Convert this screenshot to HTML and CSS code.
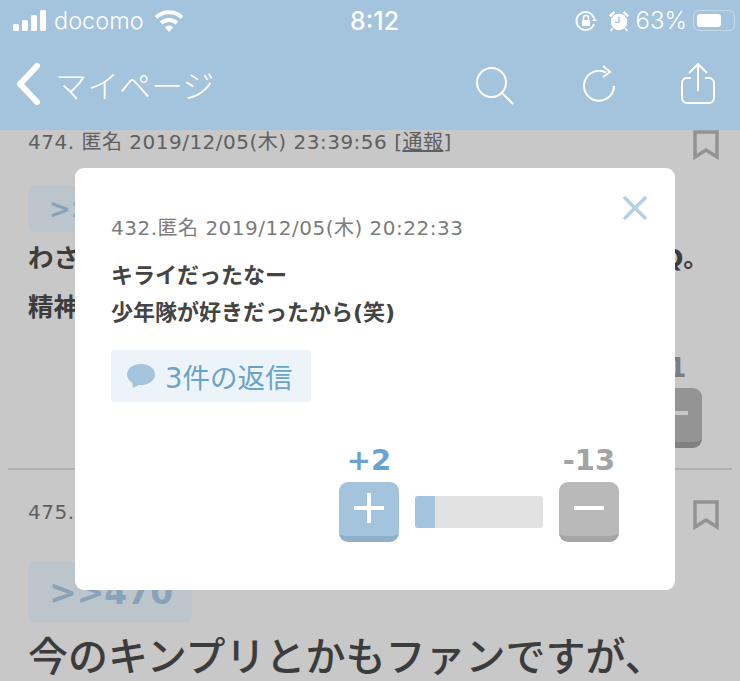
FILE: index.html
```html
<!doctype html>
<html lang="ja">
<head>
    <meta charset="UTF-8">
    <title>マイページ</title>
    <link rel="stylesheet" href="styles.css">
</head>
<body>
    <div class="screen">
        <div class="header">
            <div class="statusbar">
                <div class="status-left">
                    <svg class="signal" width="34" height="22" viewBox="0 0 34 22"><rect x="0" y="14" width="6" height="7" rx="1.5"/><rect x="9" y="10" width="6" height="11" rx="1.5"/><rect x="18" y="5" width="6" height="16" rx="1.5"/><rect x="27" y="0" width="6" height="21" rx="1.5"/></svg>
                    <span class="carrier">docomo</span>
                    <svg class="wifi" width="30" height="22" viewBox="0 0 30 22"><path d="M2 7.5a19 19 0 0 1 26 0" fill="none" stroke="#fff" stroke-width="4"/><path d="M7 13a12 12 0 0 1 16 0" fill="none" stroke="#fff" stroke-width="4"/><path d="M10.800 17.200a6 6 0 0 1 8.400 0L15 22z" fill="#fff"/></svg>
                </div>
                <div class="clock">8:12</div>
                <div class="status-right">
                    <svg class="lock" width="22" height="22" viewBox="0 0 22 22"><path d="M19 8a9 9 0 1 0 0 6" fill="none" stroke="#fff" stroke-width="2"/><path d="M17 11h5l-2.500-3z" fill="#fff"/><rect x="7" y="10" width="8" height="6" rx="1" fill="#fff"/><path d="M8.500 10V8a2.500 2.500 0 0 1 5 0v2" fill="none" stroke="#fff" stroke-width="1.500"/></svg>
                    <svg class="alarm" width="22" height="22" viewBox="0 0 24 24"><circle cx="12" cy="13" r="9" fill="#fff"/><path d="M12 7v6.500H7.500" fill="none" stroke="#a4c3dd" stroke-width="1.500"/><path d="M1 6l5-5 2 2-5 5zM23 6l-5-5-2 2 5 5z" fill="#fff"/><path d="M5 20l-2 3M19 20l2 3" stroke="#fff" stroke-width="2"/></svg>
                    <span class="percent">63%</span>
                    <div class="battery"><div class="battery-level"></div></div>
                </div>
            </div>
            <div class="navbar">
                <a class="back">
                    <svg width="28" height="44" viewBox="0 0 28 44"><path d="M23 4L6 22l17 18" fill="none" stroke="#fff" stroke-width="6" stroke-linecap="round" stroke-linejoin="round"/></svg>
                    <span>マイページ</span>
                </a>
                <div class="nav-icons">
                    <svg class="search" width="38" height="38" viewBox="0 0 38 38"><circle cx="15.500" cy="15.500" r="14.500" fill="none" stroke="#fff" stroke-width="2"/><path d="M26 26l11 11" stroke="#fff" stroke-width="2"/></svg>
                    <svg width="34" height="38" viewBox="0 0 34 38"><path d="M24 7.500A15 15 0 1 0 32 21" fill="none" stroke="#fff" stroke-width="2"/><path d="M21 1l7 6-7 5" fill="none" stroke="#fff" stroke-width="2"/></svg>
                    <svg width="34" height="42" viewBox="0 0 34 42"><path d="M10 15H6a5 5 0 0 0-5 5v15a5 5 0 0 0 5 5h22a5 5 0 0 0 5-5V20a5 5 0 0 0-5-5h-4" fill="none" stroke="#fff" stroke-width="2"/><path d="M17 28V2M8 10l9-9 9 9" fill="none" stroke="#fff" stroke-width="2"/></svg>
                </div>
            </div>
        </div>

        <div class="post post-first">
            <div class="post-meta">
                <span>474. 匿名 2019/12/05(木) 23:39:56 [<u>通報</u>]</span>
                <svg class="bookmark" width="26" height="30" viewBox="0 0 26 30"><path d="M2 2h22v25l-11-7-11 7z" fill="none" stroke="#929292" stroke-width="3.500"/></svg>
            </div>
            <div class="anchor anchor-small">&gt;&gt;470</div>
            <p class="post-text">わさびさんってメンタルが弱いって言ってたのかなあ、Q。</p>
            <p class="post-text">精神</p>
            <div class="vote-behind">
                <div class="count-behind">-1</div>
                <div class="minus-behind"><div class="minus-bar"></div></div>
            </div>
        </div>

        <div class="post post-second">
            <div class="post-meta">
                <span>475.</span>
                <svg class="bookmark" width="26" height="30" viewBox="0 0 26 30"><path d="M2 2h22v25l-11-7-11 7z" fill="none" stroke="#929292" stroke-width="3.500"/></svg>
            </div>
            <div class="anchor">&gt;&gt;470</div>
            <p class="post-big">今のキンプリとかもファンですが、</p>
        </div>

        <div class="modal">
            <svg class="close" width="28" height="28" viewBox="0 0 28 28"><path d="M3 3l22 22M25 3L3 25" stroke="#b3d0e4" stroke-width="3.500"/></svg>
            <div class="modal-meta">432.匿名 2019/12/05(木) 20:22:33</div>
            <div class="modal-text">
                <p>キライだったなー</p>
                <p>少年隊が好きだったから(笑)</p>
            </div>
            <div class="replies">
                <svg width="30" height="26" viewBox="0 0 30 26"><ellipse cx="15" cy="11.500" rx="14" ry="10.500" fill="#a4c3dd"/><path d="M6 17l1 8 9-5z" fill="#a4c3dd"/></svg>
                <span>3件の返信</span>
            </div>
            <div class="votes">
                <div class="vote">
                    <div class="vote-count plus">+2</div>
                    <div class="vote-btn btn-plus"><svg width="30" height="30" viewBox="0 0 30 30"><path d="M1 15h28M15 1v28" stroke="#fff" stroke-width="4" stroke-linecap="round"/></svg></div>
                </div>
                <div class="meter"><div class="meter-fill" style="width:20px"></div></div>
                <div class="vote">
                    <div class="vote-count minus">-13</div>
                    <div class="vote-btn btn-minus"><svg width="30" height="30" viewBox="0 0 30 30"><path d="M1 15h28" stroke="#fff" stroke-width="4" stroke-linecap="round"/></svg></div>
                </div>
            </div>
        </div>
    </div>
</body>
</html>
```

FILE: styles.css
```css
* {
    box-sizing: border-box;
    margin: 0;
    padding: 0;
}
body {
    overflow: hidden;
    font-family: "DejaVu Sans", "Noto Sans CJK JP", sans-serif;
}
.screen {
    position: relative;
    width: 740px;
    height: 681px;
    overflow: hidden;
    background: #c8c8c8;
}
.header {
    position: relative;
    z-index: 2;
    height: 130px;
    background: #a4c3dd;
    color: #fff;
}
.statusbar {
    display: grid;
    grid-template-columns: 1fr auto 1fr;
    align-items: center;
    height: 40px;
    padding: 1px 0 0 13px;
}
.status-left {
    display: flex;
    align-items: center;
    gap: 7px;
}
.signal {
    fill: #fff;
}
.carrier {
    font: 300 23.500px "Inter", sans-serif;
    margin-right: 3px;
}
.clock {
    font: 500 25px "Inter", sans-serif;
    margin-right: 4px;
}
.status-right {
    display: flex;
    align-items: center;
    justify-content: flex-end;
    gap: 6px;
    padding-right: 5px;
}
.lock {
    margin-right: 5px;
}
.percent {
    font: 300 24px "Inter", sans-serif;
}
.battery {
    width: 42px;
    height: 21px;
    padding: 3px;
    border: 1px solid #c4d9ea;
    border-radius: 6px;
}
.battery-level {
    width: 24px;
    height: 13px;
    background: #fff;
    border-radius: 3px;
}
.navbar {
    display: flex;
    align-items: center;
    justify-content: space-between;
    height: 90px;
    padding: 0 25px 3px 14px;
}
.back {
    display: flex;
    align-items: center;
    gap: 13px;
}
.back span {
    font: 300 32px "Noto Sans CJK JP", sans-serif;
}
.nav-icons {
    display: flex;
    align-items: center;
    gap: 65px;
}
.search {
    margin: 5px 3px 0 0;
}
.post {
    position: relative;
    padding: 0 21px 0 28px;
    color: #3c3c3c;
}
.post-first {
    height: 340px;
    border-bottom: 2px solid #b0b0b0;
    margin: 0 8px;
    padding: 0 13px 0 20px;
}
.post-meta {
    display: flex;
    justify-content: space-between;
    align-items: flex-start;
    font-size: 20px;
    letter-spacing: 0.5px;
    line-height: 24px;
    color: #5f5f5f;
    height: 56px;
}
.bookmark {
    flex: none;
}
.anchor {
    display: inline-block;
    width: 164px;
    height: 60px;
    background: #bdc5cc;
    border-radius: 6px;
    color: #87a2b9;
    font-size: 33px;
    font-weight: 700;
    line-height: 62px;
    padding-left: 21px;
}
.anchor-small {
    height: 46px;
    line-height: 46px;
    font-size: 26px;
}
.post-text {
    font-size: 25.500px;
    font-weight: 700;
    line-height: 49px;
    white-space: nowrap;
}
.anchor-small + .post-text {
    margin-top: 2px;
}
.post-big {
    font-size: 40px;
    font-weight: 500;
    line-height: 50px;
    white-space: nowrap;
    margin-top: 10px;
}
.vote-behind {
    position: absolute;
    right: 30px;
    top: 222px;
    text-align: center;
}
.count-behind {
    font-size: 26px;
    font-weight: 700;
    color: #7d7d7d;
    line-height: 32px;
}
.minus-behind {
    width: 60px;
    height: 60px;
    margin-top: 4px;
    background: #949494;
    border-bottom: 6px solid #808080;
    border-radius: 9px;
    padding: 23px 14px 0 32px;
}
.minus-bar {
    height: 4px;
    background: #c8c8c8;
}
.post-second {
    padding-top: 30px;
}
.post-second .post-meta {
    height: 62px;
}
.modal {
    position: absolute;
    z-index: 3;
    left: 75px;
    top: 168px;
    width: 600px;
    height: 422px;
    padding: 47px 36px 0;
    background: #fff;
    border-radius: 9px;
}
.close {
    position: absolute;
    right: 26px;
    top: 26px;
}
.modal-meta {
    font-size: 20px;
    letter-spacing: 0.5px;
    line-height: 26px;
    color: #7b7b7b;
}
.modal-text {
    margin-top: 16px;
    font-size: 22px;
    font-weight: 700;
    line-height: 37px;
    color: #444;
}
.replies {
    display: inline-flex;
    align-items: center;
    gap: 9px;
    width: 200px;
    height: 52px;
    margin-top: 19px;
    padding-left: 15px;
    background: #edf4f9;
    border-radius: 3px;
    font-size: 27.500px;
    color: #6aa3c9;
    white-space: nowrap;
}
.votes {
    display: flex;
    align-items: flex-end;
    justify-content: flex-end;
    gap: 16px;
    margin-top: 43px;
    padding-right: 20px;
}
.vote {
    display: flex;
    flex-direction: column;
    align-items: center;
    gap: 6px;
}
.vote-count {
    font-size: 29px;
    font-weight: 700;
    line-height: 31px;
}
.plus {
    color: #6aa3d2;
}
.minus {
    color: #a3a3a3;
}
.vote-btn {
    display: flex;
    align-items: center;
    justify-content: center;
    width: 60px;
    height: 60px;
    border-radius: 9px;
    padding-bottom: 3px;
}
.btn-plus {
    background: #a4c3dd;
    border-bottom: 6px solid #8fb0cb;
}
.btn-minus {
    background: #b9b9b9;
    border-bottom: 6px solid #a5a5a5;
}
.meter {
    width: 128px;
    height: 32px;
    margin-bottom: 14px;
    background: #e1e1e1;
    border-radius: 3px;
    overflow: hidden;
}
.meter-fill {
    height: 100%;
    background: #a4c3dd;
}
```
